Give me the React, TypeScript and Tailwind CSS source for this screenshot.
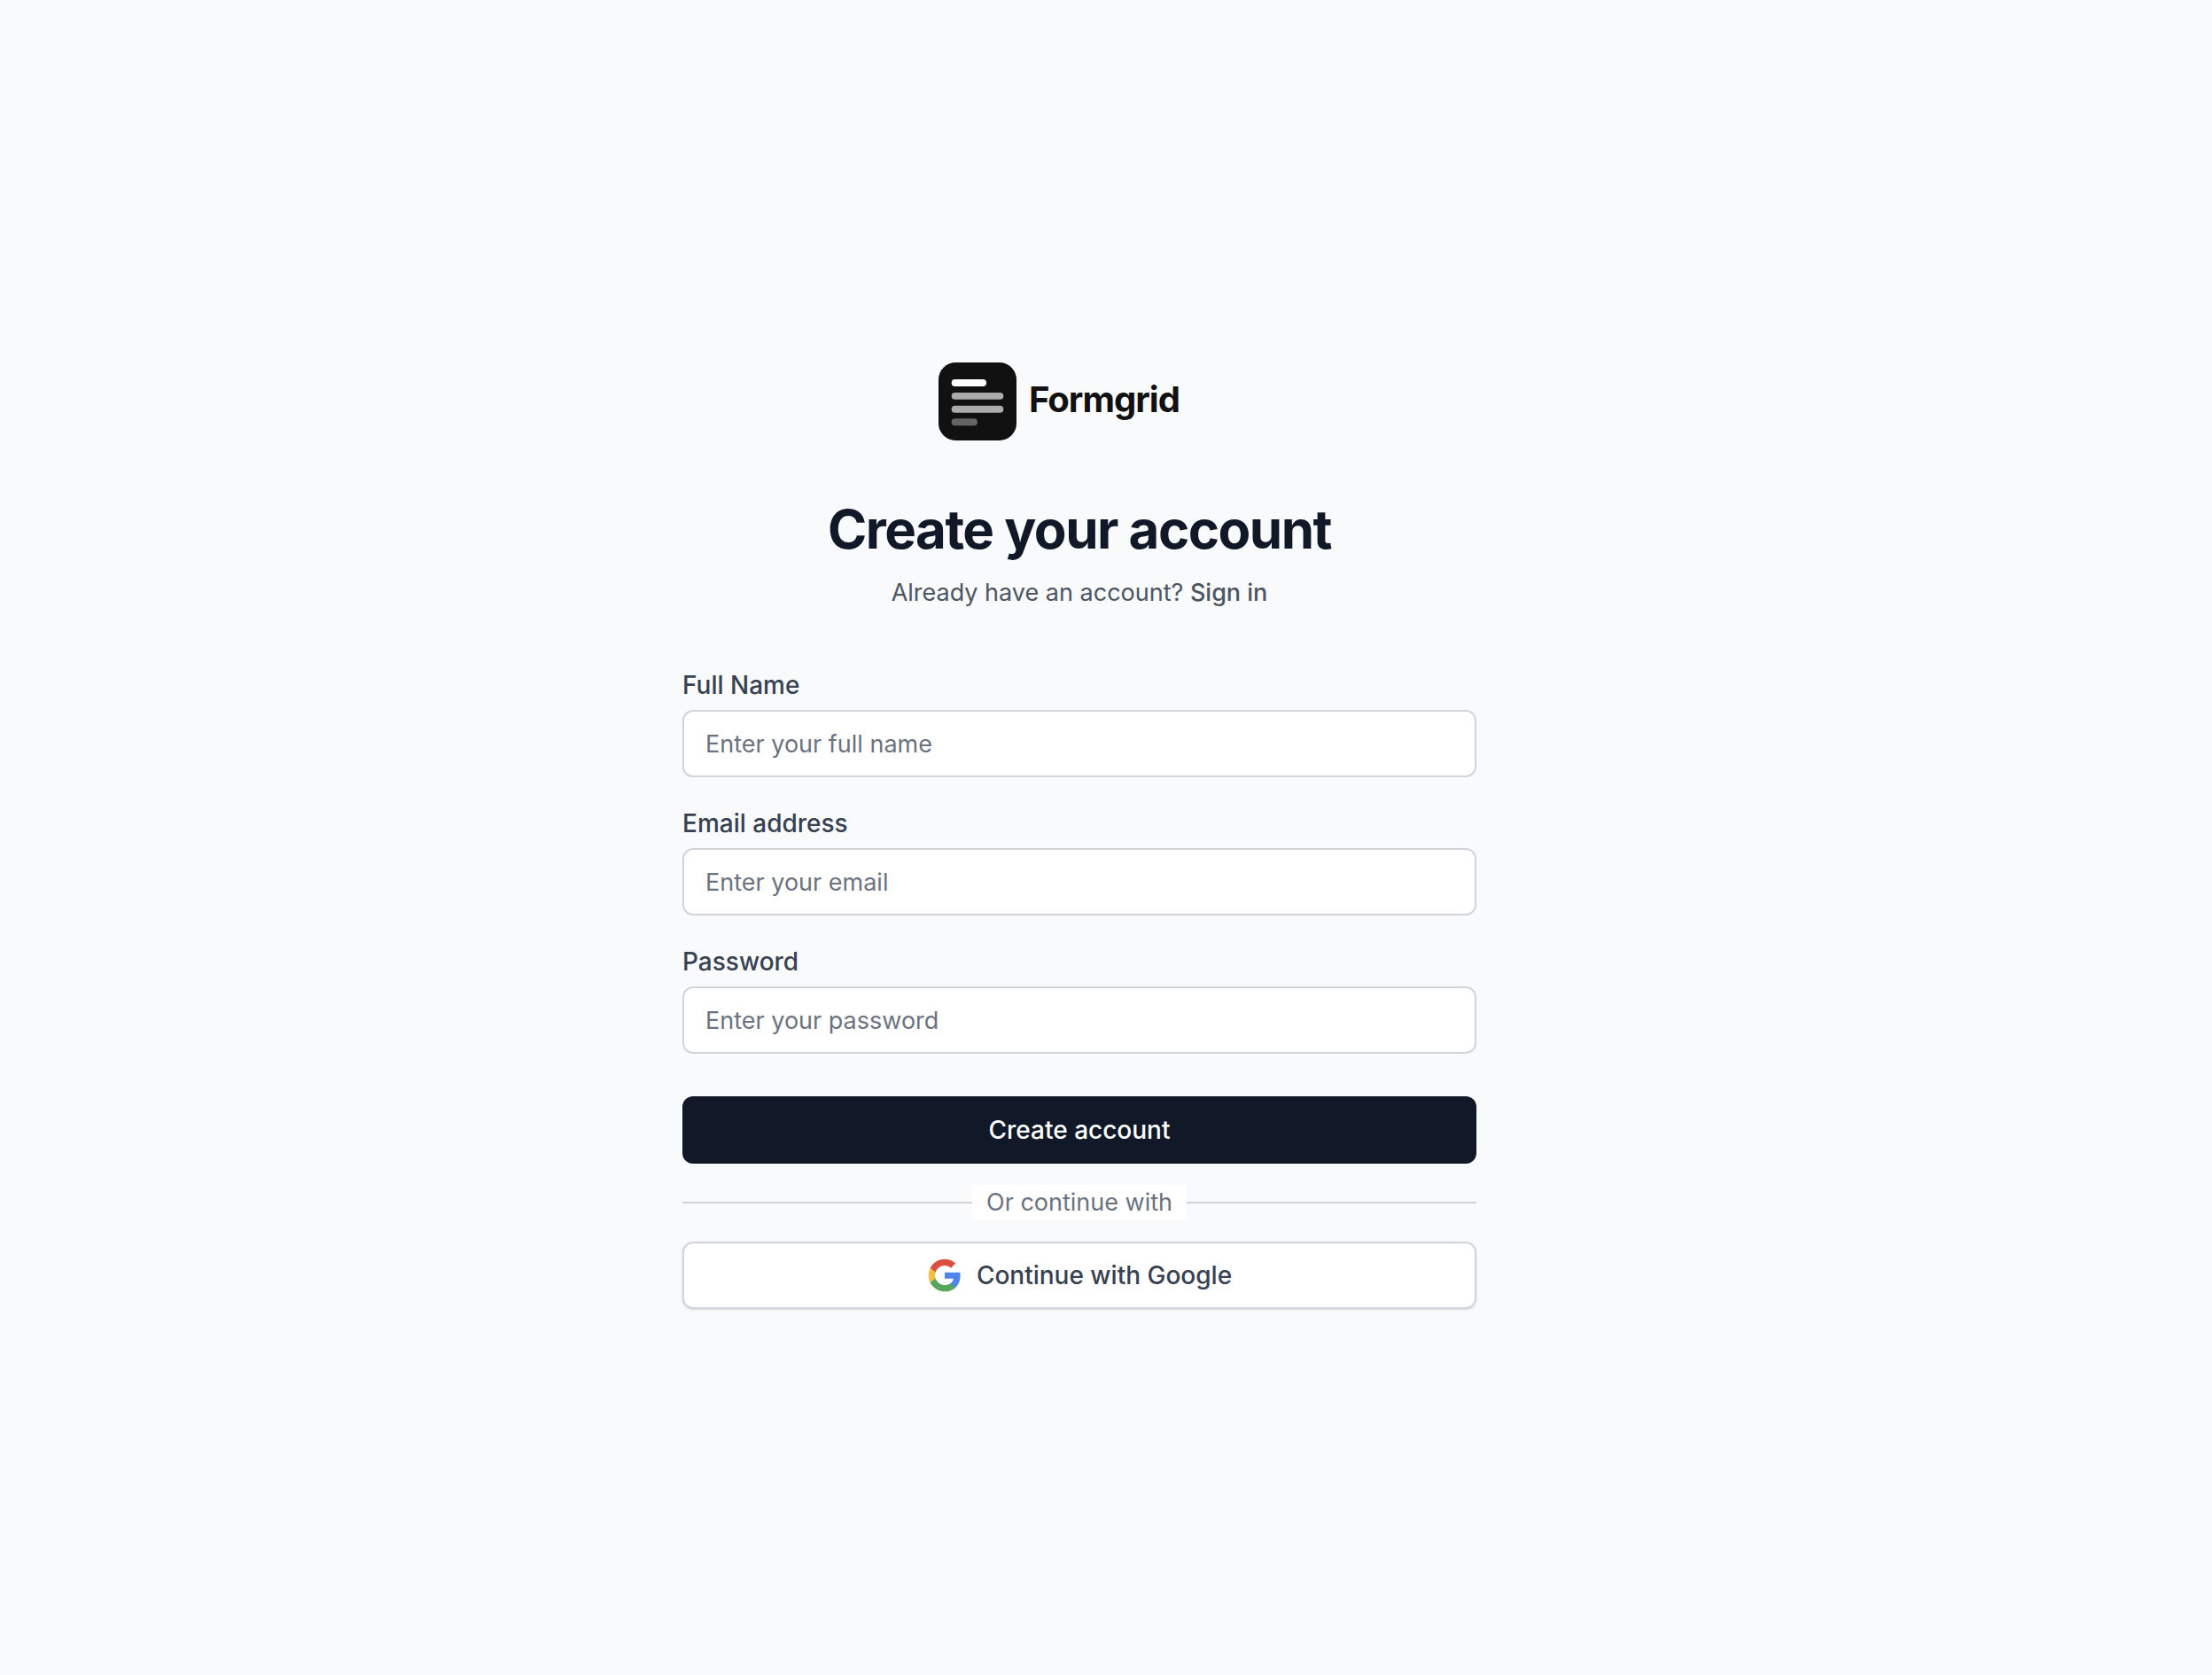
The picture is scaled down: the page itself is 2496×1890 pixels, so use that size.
import React, { useState } from 'react'

interface Field {
    id: string;
    label: string;
    type: string;
    placeholder: string;
    autoComplete: string;
}

const fields: Field[] = [
    { id: 'name', label: 'Full Name', type: 'text', placeholder: 'Enter your full name', autoComplete: 'name' },
    { id: 'email', label: 'Email address', type: 'email', placeholder: 'Enter your email', autoComplete: 'email' },
    { id: 'password', label: 'Password', type: 'password', placeholder: 'Enter your password', autoComplete: 'new-password' },
];

const Logo = () => (
    <div className="mx-auto flex w-full max-w-[318px] items-center gap-[14px]">
        <svg viewBox="0 0 48 48" className="size-[88px] shrink-0" aria-hidden="true">
            <rect width="48" height="48" rx="10.5" fill="#111111" />
            <rect x="8" y="10.4" width="21.5" height="4.3" rx="2.15" fill="#ffffff" />
            <rect x="8" y="18.5" width="32" height="4.3" rx="2.15" fill="#ababab" />
            <rect x="8" y="26.6" width="32" height="4.3" rx="2.15" fill="#ababab" />
            <rect x="8" y="34.5" width="16" height="4.3" rx="2.15" fill="#646464" />
        </svg>
        <span className="pb-1 text-[40px] leading-[48px] font-bold tracking-tight text-[#111111]">Formgrid</span>
    </div>
)

const GoogleIcon = () => (
    <svg viewBox="0 0 24 24" className="size-10" aria-hidden="true">
        <path fill="#4f86ee" d="M22.56 12.25c0-.78-.07-1.53-.2-2.25H12v4.26h5.92c-.26 1.37-1.04 2.53-2.21 3.31v2.77h3.57c2.08-1.92 3.28-4.74 3.28-8.09z" />
        <path fill="#58a55c" d="M12 23c2.97 0 5.46-.98 7.28-2.66l-3.57-2.77c-.98.66-2.23 1.06-3.71 1.06-2.86 0-5.29-1.93-6.16-4.53H2.18v2.84C3.99 20.53 7.7 23 12 23z" />
        <path fill="#f1bf42" d="M5.84 14.09c-.22-.66-.35-1.36-.35-2.09s.13-1.43.35-2.09V7.07H2.18C1.43 8.55 1 10.22 1 12s.43 3.45 1.18 4.93l2.85-2.22.81-.62z" />
        <path fill="#d85140" d="M12 5.38c1.62 0 3.06.56 4.21 1.64l3.15-3.15C17.45 2.09 14.97 1 12 1 7.7 1 3.99 3.47 2.18 7.07l3.66 2.84c.87-2.6 3.3-4.53 6.16-4.53z" />
    </svg>
)

const App: React.FC = () => {

    const [values, setValues] = useState<Record<string, string>>({ name: '', email: '', password: '' });

    const handleChange = (e: React.ChangeEvent<HTMLInputElement>) => {
        setValues({ ...values, [e.target.id]: e.target.value });
    };

    return (
        <main className="flex min-h-screen items-center justify-center bg-[#f9fafc] pr-[60px] pb-1 font-['Inter',sans-serif]">
            <div className="w-full max-w-4xl">
                <Logo />

                <div className="mt-16 text-center">
                    <h1 className="text-6xl leading-[72px] font-bold tracking-tight text-[#111827]">Create your account</h1>
                    <p className="mt-4 text-[27px] leading-10 text-[#4b5563]">
                        Already have an account?{' '}
                        <a href="#signin" className="font-medium">Sign in</a>
                    </p>
                </div>

                <form className="mt-16" onSubmit={(e) => e.preventDefault()}>
                    <div className="space-y-8">
                        {fields.map((field) => (
                            <div key={field.id}>
                                <label htmlFor={field.id} className="block text-[28px] leading-10 font-medium text-[#374151]">
                                    {field.label}
                                </label>
                                <input
                                    id={field.id}
                                    type={field.type}
                                    autoComplete={field.autoComplete}
                                    placeholder={field.placeholder}
                                    value={values[field.id]}
                                    onChange={handleChange}
                                    className="mt-2 block h-[76px] w-full rounded-xl border-2 border-[#d1d5db] bg-white px-6 text-[27px] text-[#111827] placeholder:text-[#6b7280] focus:border-[#111827] focus:outline-none"
                                />
                            </div>
                        ))}
                    </div>

                    <button type="submit" className="mt-12 flex h-[76px] w-full items-center justify-center rounded-xl bg-[#111827] text-[28px] font-medium text-white">
                        Create account
                    </button>

                    <div className="my-6 flex items-center">
                        <div className="h-0.5 flex-1 bg-[#d1d5db]" />
                        <span className="bg-white px-4 text-[27px] leading-10 text-[#6b7280]">Or continue with</span>
                        <div className="h-0.5 flex-1 bg-[#d1d5db]" />
                    </div>

                    <button type="button" className="flex h-[76px] w-full items-center justify-center gap-4 rounded-xl border-2 border-[#d1d5db] bg-white text-[28px] font-medium text-[#374151] shadow-sm">
                        <GoogleIcon />
                        Continue with Google
                    </button>
                </form>
            </div>
        </main>
    )
}

export default App
